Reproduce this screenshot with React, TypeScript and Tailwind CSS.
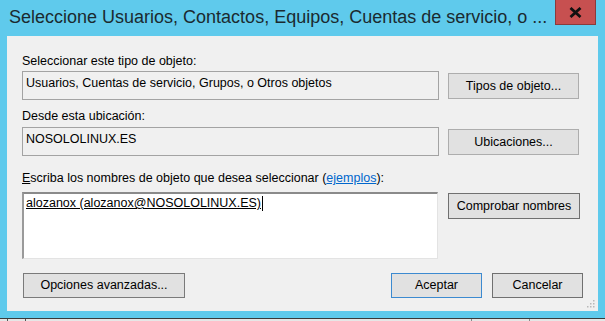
import React from "react";

const font = { fontFamily: '"Liberation Sans", Arial, sans-serif' };

function Btn({ children, className = "" }: { children: React.ReactNode; className?: string }) {
  return (
    <div
      className={
        "flex items-center justify-center bg-[#e1e1e1] border text-[12.5px] leading-[15px] text-black " +
        className
      }
    >
      {children}
    </div>
  );
}

export default function App() {
  return (
    <div className="w-[605px] h-[321px] bg-[#5fcaec] flex flex-col overflow-hidden" style={font}>
      {/* title bar */}
      <div className="h-[36px] flex items-start shrink-0">
        <div className="pl-[9px] pt-[6px] text-[18px] leading-[22px] text-[#1b2a30] whitespace-nowrap">
          Seleccione Usuarios, Contactos, Equipos, Cuentas de servicio, o ...
        </div>
        <div className="ml-auto mr-[9px] w-[41px] h-[25px] bg-[#c75050] border border-[#8a3b3b] border-t-0 flex items-center justify-center">
          <svg width="13" height="11" viewBox="0 0 13 11">
            <path d="M1.5 1 L11.5 10 M11.5 1 L1.5 10" stroke="#111" strokeWidth="2.8" strokeLinecap="butt" />
          </svg>
        </div>
      </div>

      {/* client panel */}
      <div className="mx-[7px] h-[275px] bg-[#f0f0f0] flex flex-col pl-[15px] relative text-black">
        <div className="mt-[18px] h-[15px] text-[12.5px] leading-[15px]">Seleccionar este tipo de objeto:</div>
        <div className="mt-[2px] flex items-start">
          <div className="w-[417px] h-[29px] border border-[#a3a3a3] bg-[#f0f0f0] pl-[3px] pt-[4px] text-[12.5px] leading-[15px] whitespace-nowrap">
            Usuarios, Cuentas de servicio, Grupos, o Otros objetos
          </div>
          <Btn className="ml-[9px] mt-[2px] w-[131px] h-[26px] border-[#adadad]">Tipos de objeto...</Btn>
        </div>

        <div className="mt-[9px] h-[15px] text-[12.5px] leading-[15px]">Desde esta ubicación:</div>
        <div className="mt-[3px] flex items-start">
          <div className="w-[417px] h-[29px] border border-[#a3a3a3] bg-[#f0f0f0] pl-[3px] pt-[4px] text-[12.5px] leading-[15px]">
            NOSOLOLINUX.ES
          </div>
          <Btn className="ml-[9px] mt-[2px] w-[131px] h-[26px] border-[#adadad]">Ubicaciones...</Btn>
        </div>

        <div className="mt-[15px] h-[15px] text-[12.5px] leading-[15px]">
          <span className="underline">E</span>scriba los nombres de objeto que desea seleccionar (
          <span className="text-[#0066cc] underline">ejemplos</span>):
        </div>
        <div className="mt-[6px] flex items-start">
          <div className="w-[416px] h-[67px] bg-white border-t-2 border-l-2 border-r border-b border-t-[#8a8a8a] border-l-[#9a9a9a] border-r-[#e3e3e3] border-b-[#e3e3e3] pl-[2px] pt-[2px] text-[12.5px] leading-[15px] flex items-start">
            <span className="underline">alozanox (alozanox@NOSOLOLINUX.ES)</span>
            <span className="inline-block w-[1px] h-[15px] bg-black ml-[1px]"></span>
          </div>
          <Btn className="ml-[10px] mt-[1px] w-[132px] h-[26px] border-[#707070]">Comprobar nombres</Btn>
        </div>

        <div className="mt-[14px] flex items-start">
          <Btn className="ml-[1px] w-[162px] h-[25px] border-[#7a7a7a]">Opciones avanzadas...</Btn>
          <Btn className="ml-auto w-[91px] h-[25px] border-[#3c8ad0]">Aceptar</Btn>
          <Btn className="ml-[10px] mr-[15px] w-[91px] h-[25px] border-[#707070]">Cancelar</Btn>
        </div>

        {/* resize grip */}
        <svg className="absolute right-[3px] bottom-[3px]" width="10" height="10" viewBox="0 0 10 10">
          <rect x="8" y="2" width="1.5" height="1.5" fill="#b8b8b8" />
          <rect x="5" y="5" width="1.5" height="1.5" fill="#b8b8b8" />
          <rect x="8" y="5" width="1.5" height="1.5" fill="#b8b8b8" />
          <rect x="2" y="8" width="1.5" height="1.5" fill="#b8b8b8" />
          <rect x="5" y="8" width="1.5" height="1.5" fill="#b8b8b8" />
          <rect x="8" y="8" width="1.5" height="1.5" fill="#b8b8b8" />
        </svg>
      </div>

      <div className="mt-[7px] h-[1px] bg-[#3a3a3a] shrink-0"></div>
      <div className="flex-1 bg-[#e6e6e6] flex">
        <div className="ml-[7px] w-[1px] bg-[#555]"></div>
        <div className="ml-[17px] w-[1px] bg-[#555]"></div>
        <div className="ml-[445px] w-[1px] bg-[#888]"></div>
        <div className="ml-[57px] w-[1px] bg-[#888]"></div>
      </div>
    </div>
  );
}
